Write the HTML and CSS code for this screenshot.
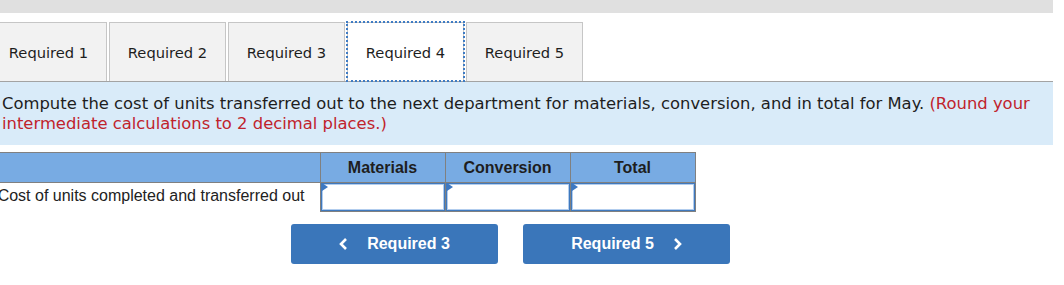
FILE: index.html
```html
<!DOCTYPE html>
<html lang="en">
<head>
    <meta charset="UTF-8">
    <meta name="viewport" content="width=device-width, initial-scale=1.0">
    <title>Required 4</title>
    <link rel="stylesheet" href="styles.css">
</head>
<body>
    <div class="topbar"></div>
    <div class="page">
        <ul class="tabs">
            <li class="tab">Required 1</li>
            <li class="tab">Required 2</li>
            <li class="tab">Required 3</li>
            <li class="tab active">Required 4</li>
            <li class="tab">Required 5</li>
        </ul>

        <div class="instructions">
            <p>Compute the cost of units transferred out to the next department for materials, conversion, and in total for May. <span class="note">(Round your intermediate calculations to 2 decimal places.)</span></p>
        </div>

        <table class="answer">
            <tr class="head">
                <th class="label"></th>
                <th>Materials</th>
                <th>Conversion</th>
                <th>Total</th>
            </tr>
            <tr>
                <td class="label">Cost of units completed and transferred out</td>
                <td class="cell"><input type="text"></td>
                <td class="cell"><input type="text"></td>
                <td class="cell"><input type="text"></td>
            </tr>
        </table>

        <div class="nav">
            <a href="#" class="btn">
                <svg width="9" height="12" viewBox="0 0 9 12"><polyline points="7,1 2,6 7,11" fill="none" stroke="#fff" stroke-width="2.6"/></svg>
                <span>Required 3</span>
            </a>
            <a href="#" class="btn">
                <span>Required 5</span>
                <svg width="9" height="12" viewBox="0 0 9 12"><polyline points="2,1 7,6 2,11" fill="none" stroke="#fff" stroke-width="2.6"/></svg>
            </a>
        </div>
    </div>
</body>
</html>
```

FILE: styles.css
```css
* {
    margin: 0;
    padding: 0;
    box-sizing: border-box;
}
body {
    background: #fff;
    color: #222;
}
.topbar {
    width: 1053px;
    height: 13px;
    background: #e0e0e0;
}
.page {
    width: 1063px;
    margin-left: -10px;
}
.tabs {
    display: flex;
    gap: 2px;
    margin-top: 9px;
    border-bottom: 1px solid #a3a3a3;
    list-style: none;
}
.tab {
    width: 117px;
    height: 59px;
    display: flex;
    align-items: center;
    justify-content: center;
    border: 1px solid #c6c6c6;
    border-bottom: none;
    background: #f2f2f2;
    font: 14.7px "DejaVu Sans", Verdana, sans-serif;
    color: #1e1e1e;
}
.tab.active {
    background: #fff;
    outline: 2px dotted #3f7cc4;
    outline-offset: -1px;
}
.instructions {
    background: #d9ebf9;
    padding: 12px 12px 11px;
    font: 16.4px/20px "DejaVu Sans", Verdana, sans-serif;
    color: #1e1e1e;
}
.note {
    color: #c0232c;
}
.answer {
    margin-top: 7px;
    border-collapse: collapse;
    font-family: "Liberation Sans", Arial, sans-serif;
}
.head th {
    height: 30px;
    background: #78abe3;
    border: 1px solid #808080;
    font-size: 16px;
    font-weight: bold;
    color: #1e1e1e;
    width: 125px;
}
.head th.label {
    width: 330px;
    border-left: none;
}
td.label {
    text-align: right;
    padding: 0 15px 3px 0;
    font-size: 16px;
    color: #222;
    height: 29px;
}
td.cell {
    position: relative;
    border: 1px solid #808080;
    border-top: none;
    padding: 0;
}
td.cell::before {
    content: "";
    position: absolute;
    left: 1px;
    top: 0;
    border-left: 6px solid #3d78c2;
    border-top: 4px solid transparent;
    border-bottom: 4px solid transparent;
}
td.cell input {
    display: block;
    width: 100%;
    height: 28px;
    border: 1px solid #4079bd;
    box-shadow: inset 0 0 0 1px #b2cdee;
    background: #fff;
    outline: none;
}
.nav {
    display: flex;
    gap: 25px;
    margin-top: 12px;
    padding-left: 301px;
}
.btn {
    width: 207px;
    height: 40px;
    display: flex;
    align-items: center;
    justify-content: center;
    gap: 19px;
    background: #3a76ba;
    border-radius: 3px;
    color: #fff;
    text-decoration: none;
    font: bold 16px "Liberation Sans", Arial, sans-serif;
}
```
